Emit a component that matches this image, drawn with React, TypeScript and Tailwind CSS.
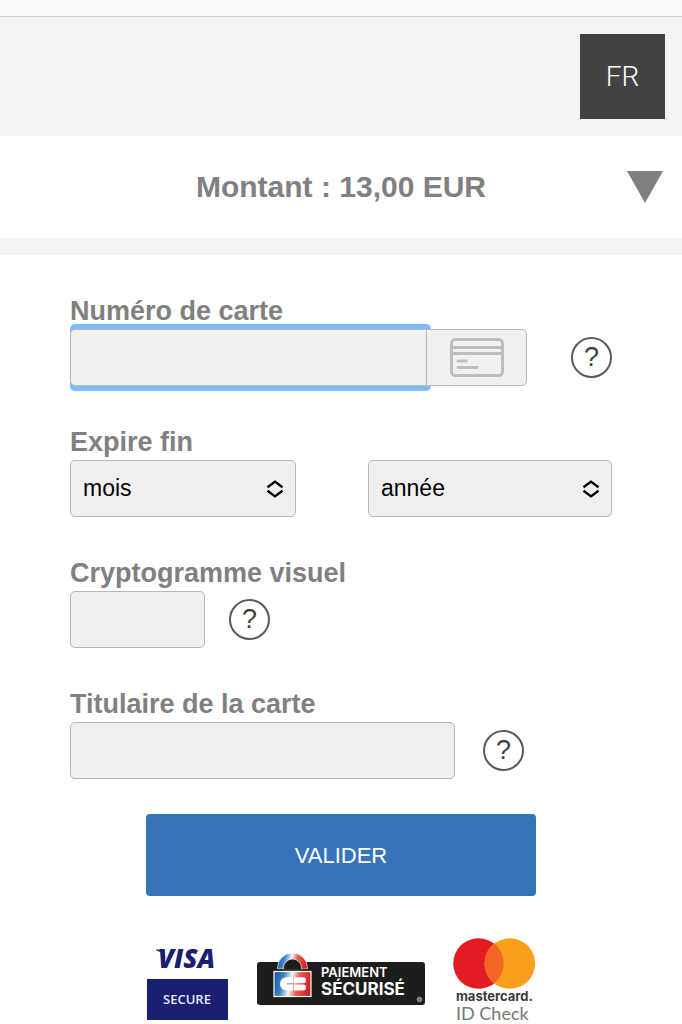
import type { ReactNode } from "react";

const label = "block text-[27px] leading-9 font-bold text-[#808080]";
const box = "h-[57px] rounded-[5px] border border-[#b8b8b8] bg-[#f0f0f0] px-3 text-[23px] text-black outline-none";

function Help({ about }: { about: string }) {
  return (
    <button
      type="button"
      aria-label={about}
      className="flex size-[41px] shrink-0 items-center justify-center rounded-full border-2 border-[#5a5a5a] text-[27px] leading-none text-[#404040]"
    >
      ?
    </button>
  );
}

function Select({ id, name, className, children }: { id: string; name: string; className: string; children: ReactNode }) {
  return (
    <div className={`relative ${className}`}>
      <select id={id} aria-label={name} className={`${box} w-full appearance-none`}>
        {children}
      </select>
      <svg
        viewBox="0 0 18 18"
        className="pointer-events-none absolute top-5 right-3 size-[18px]"
        fill="none"
        stroke="#000"
        strokeWidth="2.4"
      >
        <path d="M1.500 7.200 9 1.600l7.500 5.600M1.500 10.800 9 16.400l7.500-5.600" strokeLinejoin="round" />
      </svg>
    </div>
  );
}

function VisaSecure() {
  return (
    <svg width="82" height="82" viewBox="0 0 82 82" role="img" aria-label="Visa Secure">
      <text x="12" y="30" fontFamily="Open Sans" fontSize="26" fontWeight="800" fontStyle="italic" fill="#1a1f71">
        VISA
      </text>
      <path d="M10 11.400h8l1.500 9C17.500 16 14.500 13.300 10 12.200Z" fill="#1a1f71" />
      <rect x="1" y="41" width="81" height="41" fill="#1a1f71" />
      <text x="41" y="66" textAnchor="middle" fontFamily="Open Sans" fontSize="13" fontWeight="600" fill="#e8e8f4">
        SECURE
      </text>
    </svg>
  );
}

function PaiementSecurise() {
  return (
    <svg width="170" height="55" viewBox="0 0 170 55" role="img" aria-label="CB Paiement sécurisé">
      <defs>
        <linearGradient id="cb" x1="0" x2="1" y1="0" y2="0.15">
          <stop offset="0" stopColor="#1453a4" />
          <stop offset="0.28" stopColor="#3f83c4" />
          <stop offset="0.5" stopColor="#f4f4f8" />
          <stop offset="0.7" stopColor="#e5604f" />
          <stop offset="1" stopColor="#d8232a" />
        </linearGradient>
      </defs>
      <rect x="1" y="10" width="168" height="43" rx="3" fill="#1d1d1b" />
      <path d="M21.500 17v-1a15 15 0 0 1 30 0v1Z" fill="url(#cb)" stroke="#fff" strokeWidth="0.600" />
      <path d="M27.500 18v-2a9 9 0 0 1 18 0v2Z" fill="#1d1d1b" stroke="#fff" strokeWidth="0.600" />
      <rect x="20" y="17.300" width="33" height="1.500" fill="#1d1d1b" />
      <rect x="18" y="19.500" width="37" height="25" fill="url(#cb)" stroke="#fff" strokeWidth="1.200" />
      <path d="M36.800 25.200H30.500a6.600 6.600 0 0 0 0 13.200h6.300Z" fill="#fff" />
      <path d="M31 31.800h7" stroke="#7aa5d2" strokeWidth="1.200" />
      <path d="M38 25.200h9a3 3 0 0 1 0 6h-9ZM38 32.400h9a3 3 0 0 1 0 6h-9Z" fill="#fff" />
      <text x="65" y="25" fontFamily="Inter" fontSize="13" fontWeight="600" fill="#fff">
        PAIEMENT
      </text>
      <text x="65" y="43" fontFamily="Inter" fontSize="17" fontWeight="700" fill="#fff">
        SÉCURISÉ
      </text>
      <circle cx="163.500" cy="47.500" r="2.300" fill="#777" stroke="#bbb" strokeWidth="0.700" />
    </svg>
  );
}

function MastercardIdCheck() {
  return (
    <svg width="83" height="86" viewBox="0 0 83 86" role="img" aria-label="Mastercard ID Check">
      <circle cx="25.500" cy="25.500" r="25.300" fill="#e31b23" />
      <circle cx="56.800" cy="25.500" r="25.300" fill="#f99f1b" />
      <path d="M41.150 5.600a25.300 25.300 0 0 1 0 39.800 25.300 25.300 0 0 1 0-39.800Z" fill="#f26522" />
      <text x="3" y="63" fontFamily="Inter" fontSize="13" fontWeight="700" fill="#3c3c3c">
        mastercard.
      </text>
      <text x="3" y="82" fontFamily="Lato" fontSize="18" fill="#777">
        ID Check
      </text>
    </svg>
  );
}

export default function App() {
  return (
    <div className="min-h-screen bg-white font-['Liberation_Sans',Arial,sans-serif]">
      <div className="h-[17px] border-b border-[#d0d0d0] bg-[#fafafa]" />
      <header className="flex justify-end bg-[#f4f4f4] p-[17px]">
        <button
          type="button"
          aria-label="Langue : FR"
          className="size-[85px] bg-[#424242] font-['Roboto',sans-serif] text-[28px] font-light text-white"
        >
          FR
        </button>
      </header>

      <section className="grid h-[102px] grid-cols-[1fr_auto_1fr] items-center px-[19px]">
        <span />
        <h1 className="text-[30px] leading-9 font-bold text-[#808080]">Montant : 13,00 EUR</h1>
        <button type="button" aria-label="Afficher le détail" className="justify-self-end">
          <svg width="36" height="32" viewBox="0 0 36 32" className="block">
            <path d="M0 0h36L18 32Z" fill="#808080" />
          </svg>
        </button>
      </section>
      <div className="h-[17px] bg-[#f4f4f4]" />

      <form className="px-[70px] pt-[38px]" onSubmit={(e) => e.preventDefault()}>
        <div className="flex flex-col gap-[38px]">
          <div>
            <label htmlFor="card" className={label}>Numéro de carte</label>
            <div className="flex items-center gap-11">
              <div className="flex min-w-0 flex-1">
                <input
                  id="card"
                  inputMode="numeric"
                  className={`${box} min-w-0 flex-1 shadow-[0_-5px_#7fbcff,0_5px_#7fbcff]`}
                />
                <div className="relative -ml-[5px] flex h-[57px] w-[101px] items-center justify-center rounded-r-[5px] border border-[#b8b8b8] bg-[#f0f0f0]">
                  <svg width="54" height="39" viewBox="0 0 54 39" fill="none" stroke="#bdbdbd" strokeWidth="3">
                    <rect x="1.500" y="1.500" width="51" height="36" rx="4" />
                    <path d="M2 9.500h50M2 15.500h50" />
                    <path d="M8 23h8M8 29.500h19" strokeLinecap="round" />
                  </svg>
                </div>
              </div>
              <Help about="Aide sur le numéro de carte" />
            </div>
          </div>

          <div>
            <label htmlFor="month" className={label}>Expire fin</label>
            <div className="flex justify-between gap-4">
              <Select id="month" name="Expire fin : mois" className="w-[226px]">
                <option>mois</option>
              </Select>
              <Select id="year" name="Expire fin : année" className="w-[244px]">
                <option>année</option>
              </Select>
            </div>
          </div>

          <div>
            <label htmlFor="cvv" className={label}>Cryptogramme visuel</label>
            <div className="flex items-center gap-6">
              <input id="cvv" inputMode="numeric" className={`${box} w-[135px]`} />
              <Help about="Aide sur le cryptogramme" />
            </div>
          </div>

          <div>
            <label htmlFor="holder" className={label}>Titulaire de la carte</label>
            <div className="flex items-center gap-7">
              <input id="holder" className={`${box} w-[385px] min-w-0`} />
              <Help about="Aide sur le titulaire" />
            </div>
          </div>
        </div>

        <div className="mx-auto mt-[35px] max-w-[390px]">
          <button type="submit" className="h-[82px] w-full rounded-sm bg-[#3674ba] text-[22px] text-white">
            VALIDER
          </button>
          <div className="mt-[42px] flex items-start justify-between">
            <VisaSecure />
            <div className="pt-3.5">
              <PaiementSecurise />
            </div>
            <MastercardIdCheck />
          </div>
        </div>
      </form>
    </div>
  );
}
